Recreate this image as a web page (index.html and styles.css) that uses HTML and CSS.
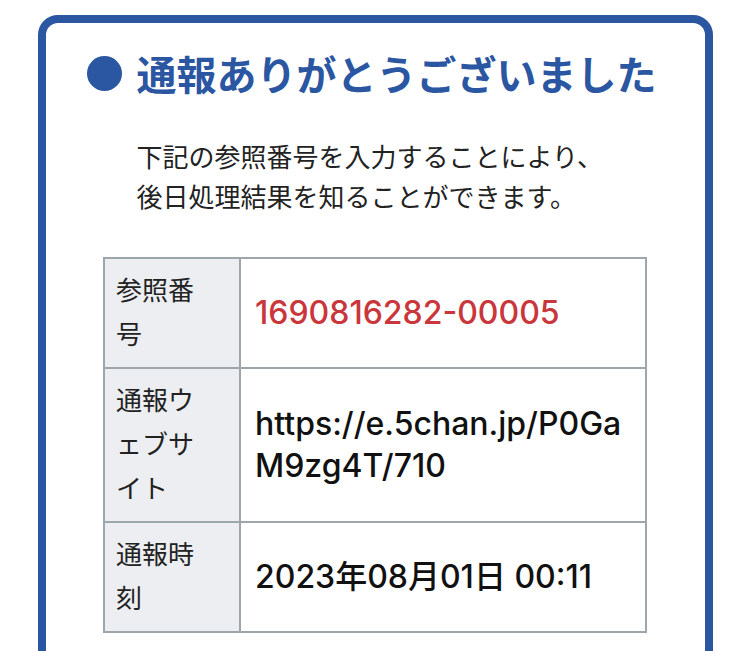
FILE: index.html
```html
<!DOCTYPE html>
<html lang="ja">
<head>
    <meta charset="UTF-8">
    <meta name="viewport" content="width=device-width, initial-scale=1.0">
    <title>通報完了</title>
    <link rel="stylesheet" href="styles.css">
</head>
<body>
    <div class="card">
        <h1 class="card-title">通報ありがとうございました</h1>
        <p class="lead">下記の参照番号を入力することにより、<br>後日処理結果を知ることができます。</p>

        <table class="report-table">
            <tr>
                <th>参照番号</th>
                <td class="ref-no">1690816282-00005</td>
            </tr>
            <tr>
                <th>通報ウェブサイト</th>
                <td class="url">https://e.5chan.jp/P0GaM9zg4T/710</td>
            </tr>
            <tr>
                <th>通報時刻</th>
                <td>2023年08月01日 00:11</td>
            </tr>
        </table>
    </div>
</body>
</html>
```

FILE: styles.css
```css
/* Global Styles */
body {
    margin: 0;
    padding: 0;
    background-color: #fff;
    color: #222;
    font-family: "Noto Sans CJK JP", sans-serif;
}

/* Card */
.card {
    box-sizing: border-box;
    width: 675px;
    margin: 15px auto 0;
    padding: 26px 0 60px;
    border: 8px solid #2b56a1;
    border-radius: 20px;
}

.card-title {
    display: flex;
    align-items: center;
    margin: 0;
    padding-left: 41px;
    font-size: 40px;
    line-height: 48px;
    font-weight: 700;
    color: #2b56a1;
}

.card-title::before {
    content: "";
    width: 35px;
    height: 35px;
    margin-right: 15px;
    border-radius: 50%;
    background-color: #2b56a1;
    flex-shrink: 0;
}

.lead {
    margin: 39px 0 41px;
    padding-left: 91px;
    font-size: 26px;
    line-height: 40px;
}

/* Result table */
.report-table {
    width: 544px;
    margin: 0 auto;
    border-collapse: collapse;
    table-layout: fixed;
    border: 2px solid #9ca6ac;
}

.report-table th,
.report-table td {
    border: 2px solid #9ca6ac;
}

.report-table th {
    width: 90px;
    padding: 8px 33px 12px 11px;
    background-color: #eceef1;
    font-size: 26px;
    line-height: 44px;
    font-weight: 400;
    text-align: left;
    vertical-align: top;
    color: #222;
}

.report-table td {
    padding: 9px 16px 9px 14px;
    font-family: Inter, "Noto Sans CJK JP", sans-serif;
    font-size: 32px;
    line-height: 42px;
    font-weight: 500;
    color: #111;
    word-break: break-all;
}

.report-table .ref-no {
    color: #c9363b;
}
```
